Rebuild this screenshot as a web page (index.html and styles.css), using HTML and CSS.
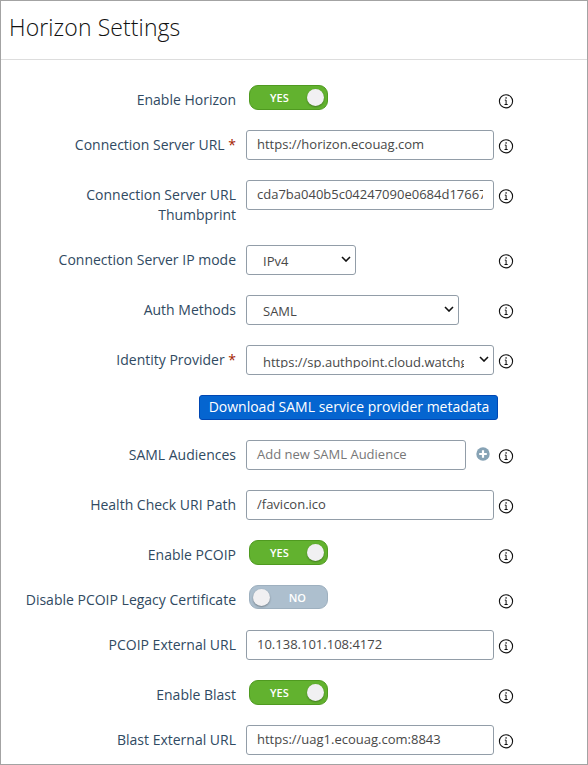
FILE: index.html
```html
<!DOCTYPE html>
<html lang="en">
<head>
<meta charset="utf-8">
<title>Horizon Settings</title>
<link rel="stylesheet" href="styles.css">
</head>
<body>
<svg class="defs" aria-hidden="true">
  <symbol id="info" viewBox="0 0 16 16"><circle cx="8" cy="8.3" r="6.6" fill="none" stroke="currentColor" stroke-width="1.1"/><rect x="7.4" y="4.3" width="1.4" height="1.3" fill="currentColor"/><path d="M6.8 7.1H8.1V11.3M6.5 11.5H9.7" fill="none" stroke="currentColor" stroke-width="1"/></symbol>
  <symbol id="chevron" viewBox="0 0 10 6"><path d="M1 1l4 4 4-4" fill="none" stroke="currentColor" stroke-width="1.6"/></symbol>
</svg>
<main class="dialog">
  <header class="header"><h1>Horizon Settings</h1></header>
  <form class="form">
    <div class="row"><label>Enable Horizon</label><div class="control"><span class="toggle on">YES</span></div><svg class="info"><use href="#info"/></svg></div>
    <div class="row"><label>Connection Server URL <b>*</b></label><div class="control"><div class="field">https://horizon.ecouag.com</div></div><svg class="info"><use href="#info"/></svg></div>
    <div class="row"><label>Connection Server URL<br>Thumbprint</label><div class="control"><div class="field"><span class="clip">cda7ba040b5c04247090e0684d17667</span></div></div><svg class="info"><use href="#info"/></svg></div>
    <div class="row"><label>Connection Server IP mode</label><div class="control"><div class="field select small"><span class="clip">IPv4</span><svg class="chevron"><use href="#chevron"/></svg></div></div><svg class="info"><use href="#info"/></svg></div>
    <div class="row"><label>Auth Methods</label><div class="control"><div class="field select medium"><span class="clip">SAML</span><svg class="chevron"><use href="#chevron"/></svg></div></div><svg class="info"><use href="#info"/></svg></div>
    <div class="row"><label>Identity Provider <b>*</b></label><div class="control"><div class="field select wide"><span class="clip">https://sp.authpoint.cloud.watchg</span><svg class="chevron"><use href="#chevron"/></svg></div></div><svg class="info"><use href="#info"/></svg></div>
    <button type="button" class="download">Download SAML service provider metadata</button>
    <div class="row"><label>SAML Audiences</label><div class="control"><div class="field audience">Add new SAML Audience</div><svg class="plus" viewBox="0 0 14 14"><circle cx="7" cy="7" r="6.7" fill="#87a3b5"/><path d="M7 3.2v7.6M3.2 7h7.6" stroke="#fff" stroke-width="2.2"/></svg></div><svg class="info"><use href="#info"/></svg></div>
    <div class="row"><label>Health Check URI Path</label><div class="control"><div class="field">/favicon.ico</div></div><svg class="info"><use href="#info"/></svg></div>
    <div class="row"><label>Enable PCOIP</label><div class="control"><span class="toggle on">YES</span></div><svg class="info"><use href="#info"/></svg></div>
    <div class="row"><label>Disable PCOIP Legacy Certificate</label><div class="control"><span class="toggle off">NO</span></div><svg class="info"><use href="#info"/></svg></div>
    <div class="row"><label>PCOIP External URL</label><div class="control"><div class="field">10.138.101.108:4172</div></div><svg class="info"><use href="#info"/></svg></div>
    <div class="row"><label>Enable Blast</label><div class="control"><span class="toggle on">YES</span></div><svg class="info"><use href="#info"/></svg></div>
    <div class="row"><label>Blast External URL</label><div class="control"><div class="field">https://uag1.ecouag.com:8843</div></div><svg class="info"><use href="#info"/></svg></div>
  </form>
</main>
</body>
</html>
```
FILE: styles.css
```css
* { box-sizing: border-box; }
body { margin: 0; background: #fff; font-family: "Open Sans", sans-serif; }
.defs { display: none; }
.dialog { width: 588px; height: 765px; border: 1px solid #a3a3a3; overflow: hidden; }
.header { height: 59px; padding: 9px 0 0 8px; border-bottom: 1px solid #ddd; }
h1 { margin: 0; font: 300 23px/34px "Open Sans", sans-serif; letter-spacing: 0.1px; color: #111; }
.form { display: flex; flex-direction: column; gap: 20px; padding-top: 25px; }
.row { display: grid; grid-template-columns: 235px 248px 16px; column-gap: 10px; align-items: start; }
.row > .info { margin-left: -6px; }
label { height: 25px; padding-top: 5px; text-align: right; font-size: 14px; font-weight: 400; line-height: 20px; color: #304a62; white-space: nowrap; }
label:has(br) { height: 45px; }
label b { font-weight: 400; color: #a32100; }
.control { display: flex; }
.field { display: flex; align-items: center; width: 248px; height: 30px; padding: 0 10px 2px 10px; border: 1px solid #929da8; border-radius: 3px; font-size: 13px; font-weight: 400; color: #484848; white-space: nowrap; }
.clip { flex: 1; overflow: hidden; }
.select { padding: 2px 4px 0 16px; }
.small { width: 110px; }
.medium { width: 213px; }
.wide .clip { height: 14px; line-height: 16px; margin-right: 15px; }
.audience { width: 220px; color: #777; }
.chevron { width: 10px; height: 6px; color: #111; margin-top: -4px; }
.info { width: 16px; height: 16px; margin-top: 8px; color: #111; }
.plus { width: 14px; height: 14px; margin: 7px 0 0 10px; }
.toggle { display: flex; align-items: center; width: 79px; height: 25px; margin-left: 3px; padding: 0 4px; border-radius: 9px; color: #fff; font-size: 11px; font-weight: 600; line-height: 15px; }
.toggle::after { content: ""; width: 17px; height: 17px; border-radius: 50%; background: #f1f0f2; box-shadow: 0 1px 2px #0005; }
.on { padding: 0 3px 0 20px; justify-content: space-between; background: #62b22f; border: 1px solid #4f9a20; }
.off { height: 24px; flex-direction: row-reverse; justify-content: space-between; padding: 0 21px 0 3px; background: #adbfce; border: 1px solid #9eb0bf; }
.download { align-self: flex-start; width: 299px; height: 25px; margin-left: 198px; padding: 0 0 2px 1px; border: 1px solid #0047b3; border-radius: 3px; background: #0565d0; color: #fff; font: 400 14px "Open Sans", sans-serif; white-space: nowrap; }
```
